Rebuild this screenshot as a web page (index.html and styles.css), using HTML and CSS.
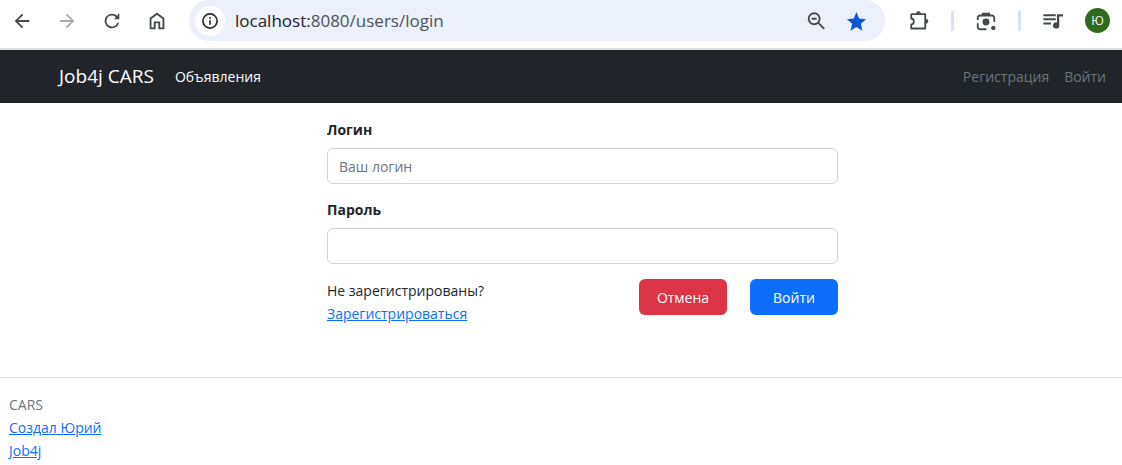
FILE: index.html
```html
<!DOCTYPE html>
<html lang="ru">
<head>
<meta charset="utf-8">
<meta name="viewport" content="width=device-width, initial-scale=1">
<title>Job4j CARS</title>
<link rel="stylesheet" href="styles.css">
</head>
<body>
<header class="browser">
  <div class="browser-nav">
    <button class="icon-btn" type="button" aria-label="Назад"><svg viewBox="0 0 24 24"><path d="M20 10.800H7.800l5.600-5.400L12 4l-8 8 8 8 1.400-1.400L7.800 13.200H20z"/></svg></button>
    <button class="icon-btn icon-btn-off" type="button" aria-label="Вперёд"><svg viewBox="0 0 24 24"><path d="M4 10.800h12.200l-5.600-5.400L12 4l8 8-8 8-1.400-1.400 5.600-5.400H4z"/></svg></button>
    <button class="icon-btn" type="button" aria-label="Обновить"><svg viewBox="0 0 24 24"><path d="M17.650 6.350A8 8 0 1 0 19.730 14h-2.080A6 6 0 1 1 12 6c1.660 0 3.140.690 4.220 1.780L14 10h6V4h-1.600v1.600z"/></svg></button>
    <button class="icon-btn" type="button" aria-label="Домой"><svg viewBox="0 0 24 24"><path d="M5 20V9.300L12 4l7 5.300V20h-4.500v-6.500h-5V20z" class="line"/></svg></button>
  </div>
  <div class="address">
    <button class="site-info" type="button" aria-label="Сведения о сайте"><svg viewBox="0 0 24 24"><circle cx="12" cy="12" r="8.500" class="line"/><path d="M11 11h2v5.500h-2zM11 7.500h2v2h-2z"/></svg></button>
    <span class="url">localhost:<span class="url-path">8080/users/login</span></span>
    <button class="icon-btn" type="button" aria-label="Масштаб"><svg viewBox="0 0 24 24"><circle cx="10" cy="9.500" r="6" class="line"/><path d="M14.500 14l6.500 6.500M7.300 9.500h5.400" class="line"/></svg></button>
    <button class="icon-btn star" type="button" aria-label="Закладка"><svg viewBox="0 0 24 24"><path d="M12.500 2.300l2.900 7 7.600.7-5.800 5 1.800 7.600-6.500-4-6.500 4L7.800 15 2 10l7.600-.7z"/></svg></button>
  </div>
  <div class="browser-tools">
    <button class="icon-btn" type="button" aria-label="Расширения"><svg viewBox="0 0 24 24"><path d="M4 4.500h14.800v15.700H3.500v-4.600c3.800-.3 3.800-6 0-6.300V5z" class="line line-round"/><path d="M8.700 4a2.700 2.700 0 0 1 5.400 0zM19.500 9.700a2.700 2.700 0 0 1 0 5.400z"/></svg></button>
    <span class="divider"></span>
    <button class="icon-btn" type="button" aria-label="Поиск по картинке"><svg viewBox="0 0 24 24"><path d="M3 11V8.500a2.500 2.500 0 0 1 2.500-2.500h13A2.500 2.500 0 0 1 21 8.500V13M8.500 6V4h7v2M3 14.500v4A2.500 2.500 0 0 0 5.500 21H12.500" class="line"/><circle cx="12" cy="13" r="3.800"/><circle cx="20" cy="19.500" r="2.400"/></svg></button>
    <span class="divider"></span>
    <button class="icon-btn" type="button" aria-label="Медиа"><svg viewBox="0 0 24 24"><path d="M1.500 4.500H15v2.200H1.500zM1.500 9H15v2.200H1.500zM1.500 13.500h8.300v2.200H1.500zM16.300 4.500H23v2.600h-4.200v9.700a3.400 3.400 0 1 1-2.500-3.200z"/></svg></button>
    <button class="avatar" type="button">Ю</button>
  </div>
</header>
<nav class="navbar">
  <a class="brand" href="#">Job4j CARS</a>
  <a class="nav-main" href="#">Объявления</a>
  <div class="nav-user">
    <a class="nav-link" href="#">Регистрация</a>
    <a class="nav-link" href="#">Войти</a>
  </div>
</nav>
<main class="content">
  <form class="login">
    <label class="label" for="login">Логин</label>
    <input class="field" id="login" type="text" placeholder="Ваш логин">
    <label class="label" for="password">Пароль</label>
    <input class="field" id="password" type="password">
    <div class="login-bottom">
      <p class="hint">Не зарегистрированы?<br><a class="link" href="#">Зарегистрироваться</a></p>
      <div class="actions">
        <button class="btn btn-danger" type="button">Отмена</button>
        <button class="btn btn-primary" type="submit">Войти</button>
      </div>
    </div>
  </form>
</main>
<footer class="footer">
  <span>CARS</span>
  <a class="link" href="#">Создал Юрий</a>
  <a class="link" href="#">Job4j</a>
</footer>
</body>
</html>
```
FILE: styles.css
```css
* {
  box-sizing: border-box;
}

body {
  margin: 0;
  background: #fff;
  color: #212529;
  font: 14px/23px "Open Sans", "Noto Sans", sans-serif;
}

button {
  border: 0;
  padding: 0;
  font: inherit;
  cursor: pointer;
}

.browser {
  display: flex;
  align-items: center;
  gap: 21px;
  padding: 0 12px 7px 11px;
  border-bottom: 2px solid #dfe3e6;
}

.browser-nav {
  display: flex;
  gap: 23px;
}

.icon-btn {
  display: block;
  flex: none;
  width: 22px;
  height: 22px;
  background: none;
  color: #45484c;
}

.icon-btn-off {
  color: #a9abad;
}

svg {
  display: block;
  width: 100%;
  height: 100%;
  fill: currentColor;
}

.line {
  fill: none;
  stroke: currentColor;
  stroke-width: 2;
}

.line-round {
  stroke-linejoin: round;
}

.address {
  display: flex;
  flex: 1;
  align-items: center;
  gap: 18px;
  min-width: 0;
  height: 41px;
  padding: 0 18px 0 6px;
  border-radius: 20px;
  background: #ebf0fa;
}

.site-info {
  flex: none;
  width: 30px;
  height: 30px;
  padding: 5px;
  border-radius: 50%;
  background: #fff;
  color: #27292c;
}

.site-info + .url {
  margin-left: -8px;
}

.url {
  flex: 1;
  color: #202226;
  font-size: 17px;
}

.url-path {
  color: #505358;
}

.star {
  color: #0b57d0;
}

.browser-tools {
  display: flex;
  align-items: center;
  gap: 21px;
  margin-left: 2px;
}

.divider {
  width: 3px;
  height: 20px;
  background: #d3e3fd;
}

.avatar {
  width: 25px;
  height: 25px;
  border-radius: 50%;
  background: #2f6b1c;
  color: #fff;
  font-size: 12px;
}

.navbar {
  display: flex;
  align-items: center;
  height: 53px;
  padding: 0 16px 0 59px;
  background: #212529;
}

.navbar a {
  text-decoration: none;
}

.brand {
  margin-right: 21px;
  color: #fff;
  font-size: 19px;
}

.nav-main {
  color: #fff;
}

.nav-user {
  display: flex;
  gap: 15px;
  margin-left: auto;
}

.nav-link {
  color: #6c757d;
}

.content {
  display: flex;
  justify-content: center;
  padding: 15px 0 52px 43px;
}

.login {
  width: 100%;
  max-width: 511px;
}

.label {
  display: block;
  margin-bottom: 7px;
  font-weight: 700;
}

.field {
  display: block;
  width: 100%;
  height: 36px;
  margin-bottom: 14px;
  padding: 0 11px;
  border: 1px solid #ced4da;
  border-radius: 6px;
  background: #fff;
  color: #212529;
  font: inherit;
}

.field::placeholder {
  color: #6c757d;
  opacity: 1;
}

.login-bottom {
  display: flex;
  justify-content: space-between;
  padding-top: 1px;
}

.hint {
  margin: 0;
}

.link {
  color: #0d6efd;
}

.actions {
  display: flex;
  gap: 23px;
}

.btn {
  width: 88px;
  height: 36px;
  border-radius: 6px;
  color: #fff;
}

.btn-danger {
  background: #dc3545;
}

.btn-primary {
  background: #0d6efd;
}

.footer {
  display: flex;
  flex-direction: column;
  align-items: flex-start;
  padding: 15px 9px 0;
  border-top: 1px solid #dee2e6;
  color: #6c757d;
}
```
